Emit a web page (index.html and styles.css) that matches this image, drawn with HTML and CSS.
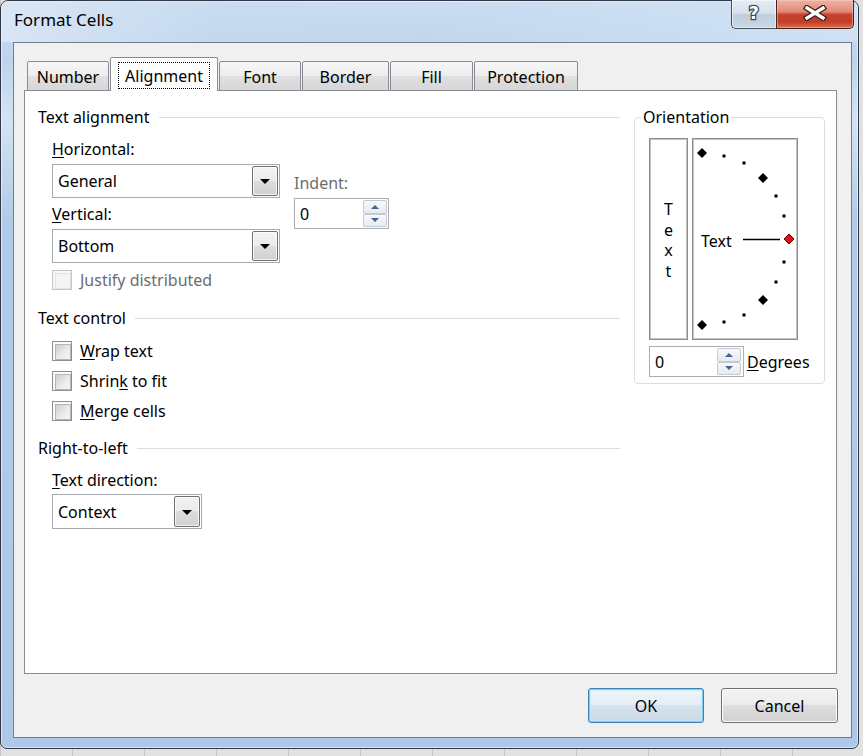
FILE: index.html
```html
<!DOCTYPE html>
<html>
<head>
<meta charset="utf-8">
<title>Format Cells</title>
<link rel="stylesheet" href="styles.css">
</head>
<body>
<div class="window">
  <div class="titlebar">
    <span class="title">Format Cells</span>
    <div class="caption-btns">
      <div class="cbtn help">
        <svg width="20" height="22" viewBox="0 0 20 22"><text x="10" y="17" text-anchor="middle" class="qmark">?</text></svg>
      </div>
      <div class="cbtn close">
        <svg width="24" height="16" viewBox="0 0 24 16">
          <path d="M4,3 L20,13 M20,3 L4,13" stroke="#3b2320" stroke-width="6" stroke-linecap="square" fill="none"/>
          <path d="M4,3 L20,13 M20,3 L4,13" stroke="#ffffff" stroke-width="3.4" stroke-linecap="square" fill="none"/>
        </svg>
      </div>
    </div>
  </div>
  <div class="client">
    <div class="tabs">
      <div class="tab t-number">Number</div>
      <div class="tab t-align selected"><span class="focus">Alignment</span></div>
      <div class="tab t-font">Font</div>
      <div class="tab t-border">Border</div>
      <div class="tab t-fill">Fill</div>
      <div class="tab t-prot">Protection</div>
    </div>
    <div class="panel">
      <div class="left">
        <div class="group-head"><span>Text alignment</span><i></i></div>
        <div class="sub align-row">
          <div class="align-col">
            <div class="label"><u>H</u>orizontal:</div>
            <div class="combo wide c-first"><span>General</span><span class="drop"></span></div>
            <div class="label l-gap"><u>V</u>ertical:</div>
            <div class="combo wide c-first"><span>Bottom</span><span class="drop"></span></div>
          </div>
          <div class="indent-col">
            <div class="label disabled">Indent:</div>
            <div class="spin s-indent"><span>0</span><span class="spinbtns"><b class="up"></b><b class="down"></b></span></div>
          </div>
        </div>
        <div class="sub check disabled c-justify"><span class="box"></span><span class="ctext">Justify distributed</span></div>

        <div class="group-head h-control"><span>Text control</span><i></i></div>
        <div class="sub check c-wrap"><span class="box"></span><span class="ctext"><u>W</u>rap text</span></div>
        <div class="sub check c-next"><span class="box"></span><span class="ctext">Shrin<u>k</u> to fit</span></div>
        <div class="sub check c-next"><span class="box"></span><span class="ctext"><u>M</u>erge cells</span></div>

        <div class="group-head h-rtl"><span>Right-to-left</span><i></i></div>
        <div class="sub label l-dir"><u>T</u>ext direction:</div>
        <div class="sub">
          <div class="combo narrow"><span>Context</span><span class="drop"></span></div>
        </div>
      </div>

      <fieldset class="orient">
        <legend>Orientation</legend>
        <div class="orient-row">
          <div class="vbox"><span>T</span><span>e</span><span>x</span><span>t</span></div>
          <div class="sbox">
            <svg class="dial" width="104" height="200" viewBox="0 0 104 200">
              <g fill="#000">
                <polygon points="9,9 14,14 9,19 4,14"/>
                <polygon points="70,34 75,39 70,44 65,39"/>
                <polygon points="70,156 75,161 70,166 65,161"/>
                <polygon points="9,181 14,186 9,191 4,186"/>
                <rect x="29.5" y="15.5" width="3" height="3"/>
                <rect x="49.5" y="22.5" width="3" height="3"/>
                <rect x="81.5" y="55.5" width="3" height="3"/>
                <rect x="89.5" y="75.5" width="3" height="3"/>
                <rect x="89.5" y="121.5" width="3" height="3"/>
                <rect x="81.5" y="141.5" width="3" height="3"/>
                <rect x="49.5" y="174.5" width="3" height="3"/>
                <rect x="29.5" y="181.5" width="3" height="3"/>
              </g>
              <line x1="50" y1="100.5" x2="87" y2="100.5" stroke="#000" stroke-width="1.5"/>
              <polygon points="96,95 101,100 96,105 91,100" fill="#e01010" stroke="#6a0000" stroke-width="1"/>
              <text x="8" y="108" class="dial-text">Text</text>
            </svg>
          </div>
        </div>
        <div class="deg-row">
          <div class="spin s-deg"><span>0</span><span class="spinbtns"><b class="up"></b><b class="down"></b></span></div>
          <span class="deg-label"><u>D</u>egrees</span>
        </div>
      </fieldset>
    </div>
    <div class="footer">
      <div class="btn ok">OK</div>
      <div class="btn cancel">Cancel</div>
    </div>
  </div>
</div>
</body>
</html>
```

FILE: styles.css
```css
* { box-sizing: border-box; }
html, body { margin: 0; padding: 0; }
body {
  width: 863px;
  height: 756px;
  overflow: hidden;
  background: #dcdcdc repeating-linear-gradient(90deg, #c6c6c6 0 1px, #e2e2e2 1px 72px);
  font-family: "Noto Sans", "Segoe UI", sans-serif;
  font-size: 16px;
  color: #000;
}
u { text-decoration-thickness: 1px; text-underline-offset: 2px; }

.window {
  width: 859px;
  height: 749px;
  border: 1px solid #2f3844;
  border-radius: 8px 8px 7px 7px;
  background: linear-gradient(180deg, #c9dcf1 0, #bdd4ed 60px, #d3e3f3 120px, #b0cbe8 220px, #aec9e8 100%);
  box-shadow: inset 0 0 0 1px rgba(255,255,255,0.55);
  display: flex;
  flex-direction: column;
}

.titlebar {
  height: 41px;
  flex: none;
  display: flex;
  justify-content: space-between;
  align-items: flex-start;
  padding: 0 4px 0 13px;
  border-radius: 7px 7px 0 0;
  background: linear-gradient(90deg, rgba(225,235,246,0.7) 0, rgba(200,220,241,0.25) 25%, rgba(180,206,235,0) 50%, rgba(210,228,246,0.45) 80%, rgba(220,234,248,0.5) 100%);
}
.title {
  font-size: 17px;
  line-height: 20px;
  margin-top: 9px;
}
.caption-btns {
  display: flex;
  margin-top: -1px;
}
.cbtn {
  height: 29px;
  display: flex;
  align-items: center;
  justify-content: center;
  border: 1px solid #46505c;
  border-top: none;
}
.help {
  width: 45px;
  border-right: none;
  border-radius: 0 0 0 5px;
  background: linear-gradient(180deg, #e4ecf5 0, #d6e0eb 48%, #bfcddc 52%, #cad7e5 100%);
  box-shadow: inset 0 0 0 1px rgba(255,255,255,0.5);
}
.help svg { margin-top: -3px; }
.qmark {
  font-family: "DejaVu Sans", sans-serif;
  font-weight: bold;
  font-size: 17px;
  fill: #fff;
  stroke: #3d4a58;
  stroke-width: 2.6px;
  paint-order: stroke fill;
}
.close {
  width: 78px;
  border-color: #4a201a;
  border-radius: 0 0 5px 0;
  background: linear-gradient(180deg, #eeb3a5 0, #e08a77 42%, #c8432e 52%, #c23c28 78%, #d9704f 100%);
  box-shadow: inset 0 0 0 1px rgba(255,210,200,0.45);
}
.close svg { margin-top: -3px; }

.client {
  flex: none;
  margin: 0 6px 0 12px;
  height: 696px;
  border: 1px solid #6f7d8e;
  background: #f0f0f0;
  display: flex;
  flex-direction: column;
}

.tabs {
  display: flex;
  gap: 1px;
  align-items: flex-end;
  height: 34px;
  margin: 14px 0 -1px 13px;
  position: relative;
  z-index: 1;
}
.tab {
  height: 30px;
  border: 1px solid #898c95;
  border-radius: 2px 2px 0 0;
  background: linear-gradient(180deg, #f7f7f7 0, #ededed 50%, #e0e0e0 50%, #d6d6d6 100%);
  display: flex;
  align-items: center;
  justify-content: center;
  line-height: 20px;
  padding-top: 2px;
}
.tab.selected {
  height: 34px;
  background: #fff;
  border-bottom: none;
  padding: 4px 7px 2px;
}
.focus {
  display: flex;
  align-items: center;
  justify-content: center;
  width: 100%;
  height: 27px;
  border: 1px dotted #000;
}
.t-number { width: 82px; }
.t-align { width: 108px; }
.t-font { width: 82px; }
.t-border { width: 87px; }
.t-fill { width: 83px; }
.t-prot { width: 104px; }

.panel {
  margin: 0 14px 0 10px;
  height: 584px;
  border: 1px solid #898c95;
  background: #fff;
  display: flex;
  align-items: flex-start;
  padding: 16px 11px 0 13px;
}
.left { width: 582px; flex: none; }

.group-head {
  display: flex;
  align-items: center;
  height: 20px;
  line-height: 20px;
}
.group-head i {
  flex: 1;
  height: 1px;
  background: #d5dfe5;
  margin-left: 9px;
}
.h-control { margin-top: 18px; }
.h-rtl { margin-top: 17px; }

.sub { margin-left: 14px; }
.label { height: 20px; line-height: 20px; white-space: nowrap; }
.label.disabled { color: #6d6d6d; }
.l-gap { margin-top: 6px; }
.l-dir { margin-top: 12px; }

.align-row { display: flex; margin-top: 12px; }
.indent-col { margin-left: 14px; padding-top: 34px; }

.combo {
  display: flex;
  align-items: center;
  height: 34px;
  border: 1px solid #a6abb3;
  background: #fff;
  padding-left: 5px;
  line-height: 20px;
}
.c-first { margin-top: 5px; }
.combo.wide { width: 228px; }
.combo.narrow { width: 150px; height: 35px; margin-top: 4px; }
.drop {
  margin-left: auto;
  margin-right: 1px;
  width: 26px;
  height: 30px;
  border: 1px solid #707070;
  border-radius: 2px;
  background: linear-gradient(180deg, #f3f3f3 0, #ebebeb 50%, #dddddd 50%, #d0d0d0 100%);
  box-shadow: inset 0 0 0 1px rgba(255,255,255,0.7);
  display: flex;
  align-items: center;
  justify-content: center;
}
.narrow .drop { height: 31px; }
.drop::after {
  content: "";
  border-left: 5px solid transparent;
  border-right: 5px solid transparent;
  border-top: 5px solid #000;
  margin-top: 1px;
}

.spin {
  display: flex;
  align-items: center;
  width: 95px;
  height: 31px;
  border: 1px solid #abadb3;
  background: #fff;
  padding-left: 5px;
  line-height: 20px;
}
.s-indent { margin-top: 5px; }
.spinbtns {
  margin-left: auto;
  margin-right: 1px;
  width: 24px;
  height: 27px;
  display: flex;
  flex-direction: column;
}
.spinbtns b {
  flex: 1;
  border: 1px solid #c4cad3;
  border-radius: 2px;
  background: linear-gradient(180deg, #f6f8fb 0, #e6ebf1 100%);
  display: flex;
  align-items: center;
  justify-content: center;
}
.spinbtns .up::after {
  content: "";
  border-left: 4px solid transparent;
  border-right: 4px solid transparent;
  border-bottom: 4px solid #4a6090;
}
.spinbtns .down::after {
  content: "";
  border-left: 4px solid transparent;
  border-right: 4px solid transparent;
  border-top: 4px solid #4a6090;
}

.check {
  display: flex;
  align-items: center;
  height: 20px;
  line-height: 20px;
}
.c-justify { margin-top: 7px; }
.c-wrap { margin-top: 13px; }
.c-next { margin-top: 10px; }
.box {
  width: 20px;
  height: 20px;
  flex: none;
  border: 1px solid #8e8f8f;
  padding: 2px;
  background: #fbfbfb;
}
.box::before {
  content: "";
  display: block;
  width: 100%;
  height: 100%;
  border: 1px solid #b3b7bd;
  background: linear-gradient(135deg, #cbcfd4 0, #e9eaec 55%, #f6f6f6 100%);
}
.ctext { margin-left: 8px; white-space: nowrap; }
.check.disabled { color: #6d6d6d; }
.check.disabled .box { border-color: #c4c4c4; background: #f7f7f7; }
.check.disabled .box::before { border-color: #e2e2e2; background: #f4f4f4; }

.orient {
  margin: 0 0 0 14px;
  width: 191px;
  flex: none;
  min-width: 0;
  border: 1px solid #d5dfe5;
  border-radius: 4px;
  padding: 11px 14px 6px 14px;
}
.orient legend {
  padding: 0 2px;
  margin-left: -8px;
  line-height: 20px;
}
.orient-row { display: flex; gap: 4px; }
.vbox, .sbox {
  height: 202px;
  border: 1px solid #8c8c8c;
  box-shadow: inset 0 0 0 1px #c4c4c4;
}
.vbox {
  width: 39px;
  display: flex;
  flex-direction: column;
  align-items: center;
  justify-content: center;
  line-height: 20.5px;
  padding-top: 2px;
}
.sbox { width: 106px; }
.dial { display: block; }
.dial-text { font-family: "Noto Sans", sans-serif; font-size: 16px; fill: #000; }

.deg-row {
  display: flex;
  align-items: center;
  margin-top: 6px;
}
.s-deg .spinbtns { margin-right: 2px; }
.deg-label { margin-left: 3px; line-height: 20px; }

.footer {
  display: flex;
  justify-content: flex-end;
  gap: 17px;
  margin: 14px 13px 0 0;
}
.btn {
  height: 35px;
  border: 1px solid #707070;
  border-radius: 3px;
  background: linear-gradient(180deg, #f3f3f3 0, #ebebeb 50%, #dddddd 50%, #d1d1d1 100%);
  box-shadow: inset 0 0 0 1px #fcfcfc;
  display: flex;
  align-items: center;
  justify-content: center;
  line-height: 20px;
}
.ok {
  width: 116px;
  border-color: #3c7fb1;
  box-shadow: inset 0 0 0 1px #7fd0f2, inset 0 0 0 2px rgba(190,232,250,0.6);
  background: linear-gradient(180deg, #eef5fa 0, #e4eef6 50%, #d6e3ee 50%, #cbd9e6 100%);
}
.cancel { width: 117px; }
```
